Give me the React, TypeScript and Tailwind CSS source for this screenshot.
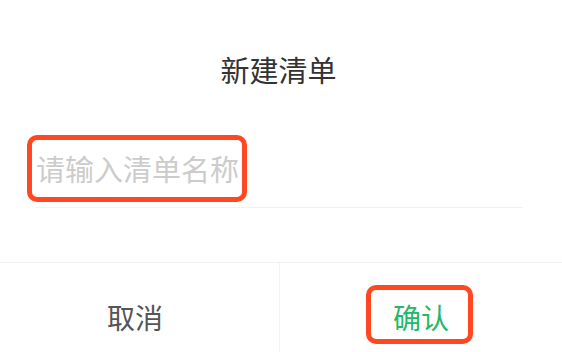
export default function App() {
  return (
    <div
      className="relative w-[562px] h-[352px] overflow-hidden bg-white"
      style={{ fontFamily: '"Noto Sans CJK SC", "Noto Sans", sans-serif' }}
    >
      <div className="pt-[49px] pr-[5px] text-center text-[29px] leading-[40px] text-[#333333]">
        新建清单
      </div>

      <div className="mx-[36px] mt-[59px] border-b border-[#f2f2f2] pb-[19px] w-[487px]">
        <input
          className="block w-full h-[40px] text-[29px] leading-[40px] text-[#333333] outline-none placeholder:text-[#cccccc] bg-transparent"
          placeholder="请输入清单名称"
        />
      </div>

      <div className="mt-[54px] flex h-[108px] border-t border-[#f2f2f2]">
        <button className="flex w-[280px] items-center justify-center border-r border-[#f2f2f2] pr-[9px] text-[28px] text-[#555555]">
          取消
        </button>
        <button className="flex flex-1 items-center justify-center text-[28px] text-[#21b86a]">
          确认
        </button>
      </div>

      {/* annotation boxes */}
      <div className="absolute left-[27px] top-[135px] h-[67px] w-[220px] rounded-[10px] border-[5px] border-[#ff4721]" />
      <div className="absolute left-[366px] top-[285px] h-[59px] w-[107px] rounded-[10px] border-[5px] border-[#ff4721]" />
    </div>
  );
}
